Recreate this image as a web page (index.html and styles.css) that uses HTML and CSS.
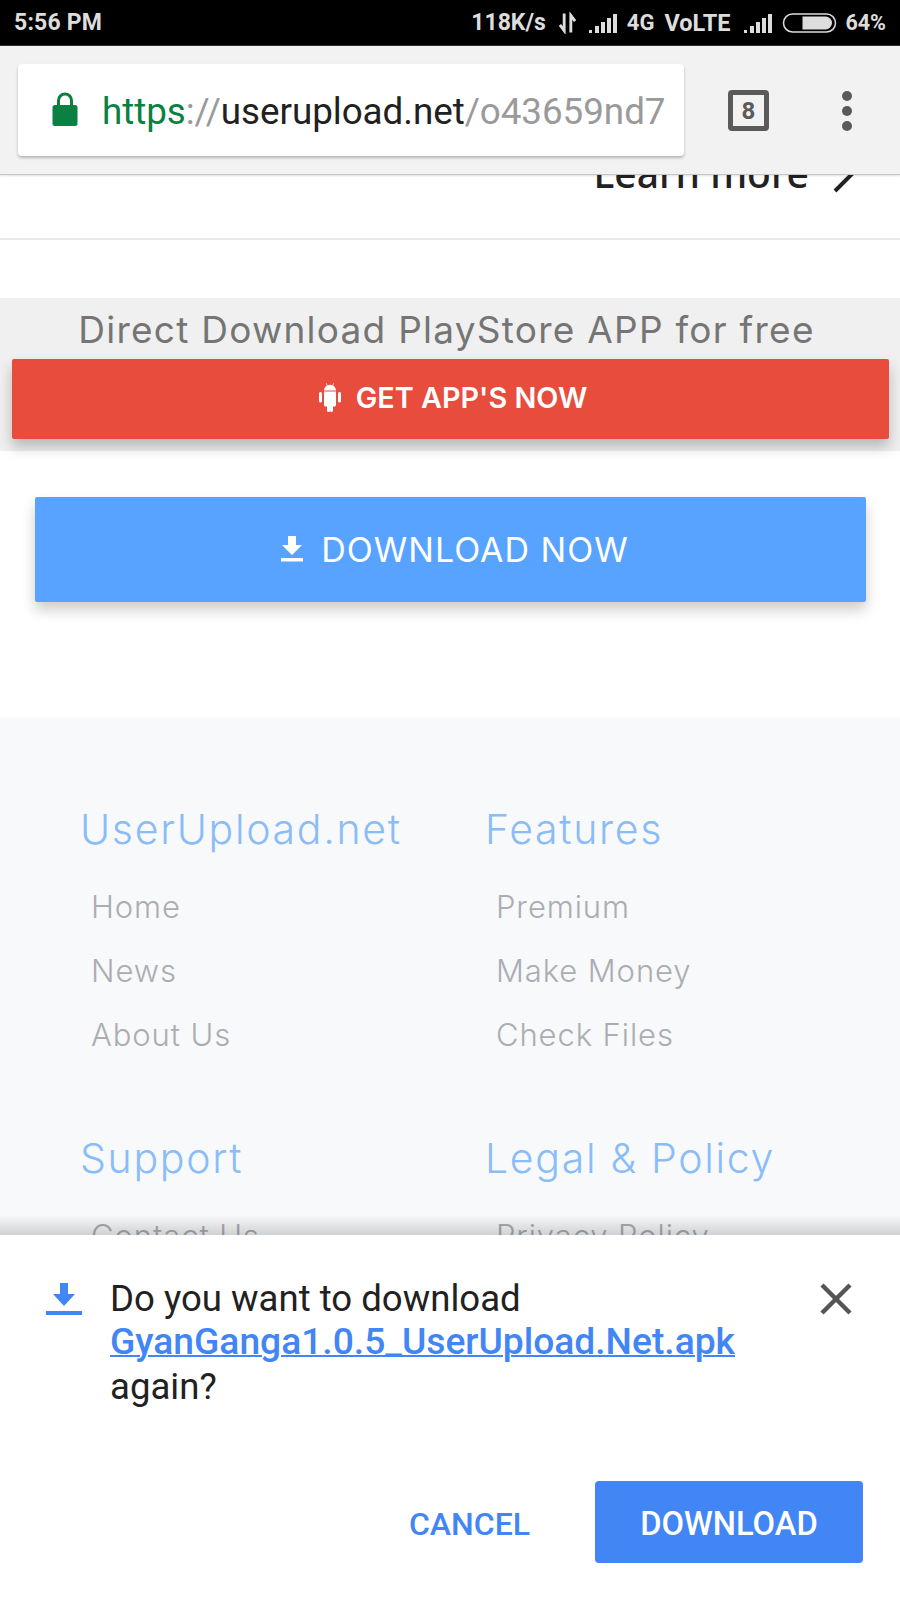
FILE: index.html
```html
<!DOCTYPE html>
<html lang="en">
<head>
<meta charset="utf-8">
<title>UserUpload.net</title>
<link rel="stylesheet" href="styles.css">
</head>
<body>
<div class="phone">
  <header class="status">
    <span class="status-time">5:56 PM</span>
    <div class="status-right">
      <span class="speed">118K/s</span>
      <svg class="ic-data" viewBox="0 0 20 22"><path d="M6.500 1v18L2 13M13.500 21V3l4.500 6" fill="none" stroke="#ddd" stroke-width="3"/></svg>
      <svg class="ic-signal" viewBox="0 0 28 20"><path d="M0 17h3v3H0zM6 13h4v7H6zM12 9h4v11h-4zM18 5h4v15h-4zM24 1h4v19h-4z" fill="#ddd"/></svg>
      <span class="net">4G</span>
      <span class="volte">VoLTE</span>
      <svg class="ic-signal" viewBox="0 0 28 20"><path d="M0 17h3v3H0zM6 13h4v7H6zM12 9h4v11h-4zM18 5h4v15h-4zM24 1h4v19h-4z" fill="#ddd"/></svg>
      <svg class="ic-batt" viewBox="0 0 54 20"><rect x="1" y="1" width="52" height="18" rx="9" fill="none" stroke="#ddd" stroke-width="1.500"/><path d="M20 3.500h23a6.500 6.500 0 0 1 0 13H20z" fill="#ddd"/></svg>
      <span class="pct">64%</span>
    </div>
  </header>

  <div class="toolbar">
    <div class="omnibox">
      <svg class="ic-lock" viewBox="0 0 26 34"><path d="M6.500 14V8.500a6.500 6.500 0 0 1 13 0V14" fill="none" stroke="#0b8043" stroke-width="3"/><rect x="0.500" y="13" width="25" height="21" rx="2.500" fill="#0b8043"/></svg>
      <div class="url"><span class="url-https">https</span><span class="url-dim">://</span><span class="url-host">userupload.net</span><span class="url-dim">/o43659nd7</span></div>
    </div>
    <div class="tabs"><span class="tabs-count">8</span></div>
    <div class="menu"><i></i><i></i><i></i></div>
  </div>

  <main class="page">
    <div class="learn">
      <span class="learn-text">Learn more</span>
      <svg class="ic-chev" viewBox="0 0 24 40"><path d="M3 3l17 17L3 37" fill="none" stroke="#222" stroke-width="4"/></svg>
    </div>
    <div class="promo">
      <h2 class="promo-title">Direct Download PlayStore APP for free</h2>
      <a class="btn-app">
        <svg class="ic-android" viewBox="0 0 24 30"><path fill="#fff" d="M6 9.500h12v13.500a1.500 1.500 0 0 1-1.500 1.500H15v4a1.500 1.500 0 0 1-3 0v-4h0v4a1.500 1.500 0 0 1-3 0v-4H7.500A1.500 1.500 0 0 1 6 23zM2.500 10A1.500 1.500 0 0 1 4 11.500v7.500a1.500 1.500 0 0 1-3 0v-7.500A1.500 1.500 0 0 1 2.500 10zM21.500 10a1.500 1.500 0 0 1 1.500 1.500v7.500a1.500 1.500 0 0 1-3 0v-7.500a1.500 1.500 0 0 1 1.500-1.500zM6 8.500c.2-2.500 1.500-4 3-4.900L7.800 1.300l.5-.3L9.600 3.200a7 7 0 0 1 4.800 0L15.700 1l.5.3L15 3.600c1.500.9 2.800 2.400 3 4.900z"/></svg>
        <span>GET APP'S NOW</span>
      </a>
    </div>
    <div class="dl-wrap">
      <a class="btn-dl">
        <svg class="ic-dl" viewBox="0 0 22 26"><path fill="#fff" d="M7 0h8v9h6L11 19 1 9h6zM0 22h22v3.500H0z"/></svg>
        <span>DOWNLOAD NOW</span>
      </a>
    </div>
    <footer class="foot">
      <section class="foot-col">
        <h3 class="foot-head">UserUpload.net</h3>
        <a class="foot-link">Home</a>
        <a class="foot-link">News</a>
        <a class="foot-link">About Us</a>
      </section>
      <section class="foot-col">
        <h3 class="foot-head">Features</h3>
        <a class="foot-link">Premium</a>
        <a class="foot-link">Make Money</a>
        <a class="foot-link">Check Files</a>
      </section>
      <section class="foot-col">
        <h3 class="foot-head">Support</h3>
        <a class="foot-link">Contact Us</a>
      </section>
      <section class="foot-col">
        <h3 class="foot-head">Legal &amp; Policy</h3>
        <a class="foot-link">Privacy Policy</a>
      </section>
    </footer>
    <div class="sheet-shadow"></div>
  </main>

  <aside class="sheet">
    <div class="sheet-top">
      <svg class="ic-sheet-dl" viewBox="0 0 36 32"><path fill="#4285f4" d="M14 0h8v11h7L18 23 7 11h7zM0 28h36v4H0z"/></svg>
      <p class="sheet-text">Do you want to download <a class="sheet-link">GyanGanga1.0.5_UserUpload.Net.apk</a> again?</p>
      <svg class="ic-close" viewBox="0 0 32 32"><path d="M2 2l28 28M30 2L2 30" fill="none" stroke="#555" stroke-width="4.500"/></svg>
    </div>
    <div class="sheet-actions">
      <a class="act-cancel">CANCEL</a>
      <a class="act-download">DOWNLOAD</a>
    </div>
  </aside>
</div>
</body>
</html>
```

FILE: styles.css
```css
* { box-sizing: border-box; }
html, body { margin: 0; padding: 0; background: #fff; }
.phone { width: 900px; height: 1600px; display: flex; flex-direction: column; overflow: hidden; font-family: Roboto, "Liberation Sans", sans-serif; }

.status { height: 46px; flex: none; background: #000; color: #ddd; display: flex; align-items: center; justify-content: space-between; padding: 0 14px 0; font-size: 22px; font-weight: 700; border-bottom: 1px solid #333; }
.status-time { font-size: 23px; letter-spacing: 0.2px; }
.status-right { display: flex; align-items: center; }
.speed { font-size: 23px; }
.ic-data { width: 19px; height: 22px; margin: 0 12px 0 12px; }
.ic-signal { width: 28px; height: 20px; margin-right: 10px; }
.volte { font-size: 23.500px; margin-left: 10px; margin-right: 14px; }
.pct { font-size: 21.500px; }
.ic-batt { width: 55px; height: 20px; margin-right: 8px; }

.toolbar { height: 129px; flex: none; background: #f2f2f2; display: flex; align-items: flex-start; border-bottom: 1px solid #c6c6c6; box-shadow: 0 1px 2px rgba(0,0,0,.12); position: relative; z-index: 2; padding: 18px 0 0 18px; }
.omnibox { width: 666px; height: 92px; background: #fff; border-radius: 4px; box-shadow: 0 2px 3px rgba(0,0,0,.25); display: flex; align-items: center; padding-left: 34px; }
.ic-lock { width: 26px; height: 34px; margin-right: 24px; margin-top: -2px; }
.url { font-size: 36.800px; line-height: 44px; margin-top: 3px; white-space: nowrap; letter-spacing: -0.05px; }
.url-https { color: #0b8043; }
.url-dim { color: #9a9a9a; }
.url-host { color: #212121; }
.tabs { width: 41px; height: 41px; margin: 26px 0 0 44px; border: 5px solid #5a5a5a; border-radius: 4px; display: flex; align-items: center; justify-content: center; font-size: 24px; font-weight: 700; color: #5a5a5a; }
.menu { margin: 27px 0 0 73px; display: flex; flex-direction: column; gap: 5px; }
.menu i { display: block; width: 10px; height: 10px; border-radius: 50%; background: #5a5a5a; }

.page { flex: 1; min-height: 0; overflow: hidden; position: relative; background: #fff; font-family: Inter, "Open Sans", sans-serif; }
.learn { height: 65px; display: flex; justify-content: flex-end; align-items: flex-start; border-bottom: 2px solid #e8e8e8; padding-right: 44px; }
.learn-text { font-family: "Noto Sans", sans-serif; font-weight: 500; font-size: 39px; line-height: 44px; margin-top: -24px; color: #222; }
.ic-chev { width: 24px; height: 40px; margin: -21px 0 0 23px; }

.promo { margin-top: 58px; height: 153px; background: #f0f0f0; padding: 8px 12px 0 12px; display: flex; flex-direction: column; }
.promo-title { margin: 0; height: 53px; padding-right: 7px; text-align: center; font-size: 37px; line-height: 48px; font-weight: 400; color: #757575; letter-spacing: 1.250px; white-space: nowrap; }
.btn-app { width: 877px; height: 80px; background: #e74c3c; border-radius: 2px; box-shadow: 0 8px 14px rgba(0,0,0,.24); display: flex; align-items: center; justify-content: center; color: #fff; font-size: 28.800px; font-weight: 600; padding: 0 0 4px 4px; }
.ic-android { width: 24px; height: 30px; margin-right: 14px; }

.dl-wrap { padding: 46px 34px 115px 35px; }
.btn-dl { height: 105px; background: #57a3ff; border-radius: 2px; box-shadow: 0 8px 14px rgba(0,0,0,.2); display: flex; align-items: center; justify-content: center; padding-left: 9px; color: #fff; font-size: 34px; font-weight: 400; letter-spacing: 1px; }
.ic-dl { width: 22px; height: 26px; margin-right: 18px; margin-bottom: 2px; }

.foot { background: #f8f9fb; display: grid; grid-template-columns: 405px 1fr; padding: 84px 0 40px 80px; row-gap: 63px; }
.foot-col { display: flex; flex-direction: column; align-items: flex-start; }
.foot-head { margin: 0 0 18px; font-size: 41px; line-height: 56px; font-weight: 300; color: #8abcf7; letter-spacing: 1.700px; white-space: nowrap; }
.foot-link { height: 64px; line-height: 64px; padding-left: 11px; font-size: 31px; font-weight: 300; color: #aaadb2; letter-spacing: .9px; white-space: nowrap; }

.sheet-shadow { position: absolute; left: 0; right: 0; bottom: 0; height: 20px; background: linear-gradient(to bottom, rgba(0,0,0,0), rgba(0,0,0,.16)); }

.sheet { height: 365px; flex: none; background: #fff; padding: 48px 37px 37px 46px; display: flex; flex-direction: column; justify-content: space-between; }
.sheet-top { display: flex; align-items: flex-start; }
.ic-sheet-dl { width: 36px; height: 32px; flex: none; margin-right: 28px; }
.sheet-text { margin: -6px 0 0; width: 670px; font-size: 36.600px; line-height: 44px; color: #212121; }
.sheet-link { display: block; margin: -2px 0 2px; font-size: 37.200px; color: #4285f4; font-weight: 500; text-decoration: underline; text-decoration-thickness: 2px; white-space: nowrap; }
.ic-close { width: 32px; height: 32px; flex: none; margin-left: 40px; }
.sheet-actions { display: flex; justify-content: flex-end; align-items: center; font-size: 32px; font-weight: 500; }
.act-cancel { color: #4285f4; margin-right: 65px; padding-top: 4px; }
.act-download { width: 268px; height: 82px; background: #4285f4; color: #fff; border-radius: 4px; display: flex; align-items: center; justify-content: center; font-size: 32.700px; padding-top: 4px; }
```
